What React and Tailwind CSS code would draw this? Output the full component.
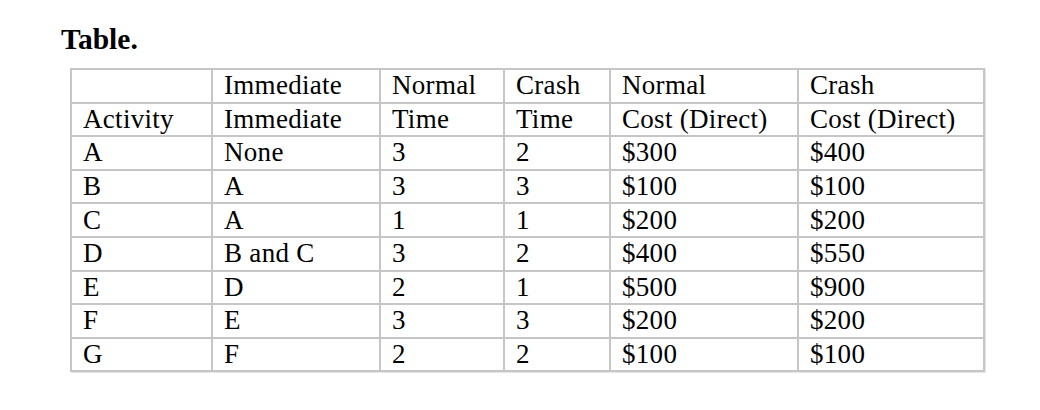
const rows = [
  ['A', 'None', '3', '2', '$300', '$400'],
  ['B', 'A', '3', '3', '$100', '$100'],
  ['C', 'A', '1', '1', '$200', '$200'],
  ['D', 'B and C', '3', '2', '$400', '$550'],
  ['E', 'D', '2', '1', '$500', '$900'],
  ['F', 'E', '3', '3', '$200', '$200'],
  ['G', 'F', '2', '2', '$100', '$100'],
]

const head = [
  ['', 'Immediate', 'Normal', 'Crash', 'Normal', 'Crash'],
  ['Activity', 'Immediate', 'Time', 'Time', 'Cost (Direct)', 'Cost (Direct)'],
]

const widths = ['w-[141px]', 'w-[168px]', 'w-[124px]', 'w-[106px]', 'w-[188px]', 'w-[186px]']

const Cell = ({ children }) => (
  <td className="border-2 border-[#c6c6c6] h-[33.6px] pl-[11px] py-0 align-middle leading-none whitespace-nowrap">
    {children}
  </td>
)

const App = () => {
  return (
    <div className="w-[1040px] h-[410px] bg-white overflow-hidden">
      <h1 className="pl-[61px] pt-[22px] text-[29.5px] font-bold leading-[34px] text-black font-['Liberation_Serif',serif]">
        Table.
      </h1>

      <div className="ml-[70px] mt-[12px] w-fit shadow-[1px_1px_0_#e6e6e6]">
        <table className="table-fixed border-collapse text-[27px] tracking-[0.3px] text-black font-['Liberation_Serif',serif]">
          <colgroup>
            {widths.map((w, i) => (
              <col key={i} className={w} />
            ))}
          </colgroup>
          <tbody>
            {head.map((r, i) => (
              <tr key={'h' + i}>
                {r.map((c, j) => (
                  <Cell key={j}>{c}</Cell>
                ))}
              </tr>
            ))}
            {rows.map((r, i) => (
              <tr key={i}>
                {r.map((c, j) => (
                  <Cell key={j}>{c}</Cell>
                ))}
              </tr>
            ))}
          </tbody>
        </table>
      </div>
    </div>
  )
}

export default App
